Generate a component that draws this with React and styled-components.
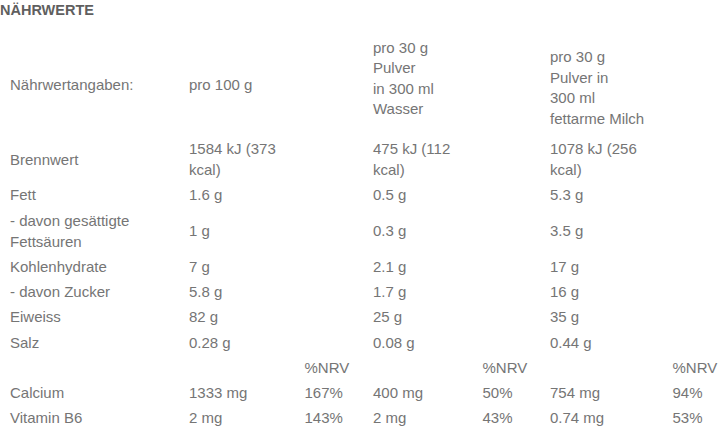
import React from "react";
import styled, { createGlobalStyle } from "styled-components";

const Global = createGlobalStyle`
  html, body { margin: 0; padding: 0; background: #ffffff; }
  body { font-family: "Liberation Sans", Arial, sans-serif; }
`;

const Page = styled.div`
  width: 720px;
  height: 430px;
  overflow: hidden;
  background: #fff;
`;

const Title = styled.div`
  font-size: 14.5px;
  line-height: 20px;
  font-weight: bold;
  color: #5f5f5f;
`;

const Table = styled.table`
  margin: 14px 0 0 10px;
  width: 710px;
  table-layout: fixed;
  border-collapse: collapse;
  font-size: 15px;
  line-height: 21.2px;
  color: #757575;
`;

const Cell = styled.td`
  padding: 2px 12px 2px 0;
  vertical-align: middle;
  text-align: left;
  white-space: normal;
`;

const HeadCell = styled(Cell)`
  line-height: 20.5px;
  padding-top: ${(p) => p.$top}px;
  padding-bottom: ${(p) => p.$bottom}px;
`;

const widths = [179, 115.5, 68.5, 109.5, 67.5, 122.5, 47.5];

const rows = [
  ["Brennwert", "1584 kJ (373 kcal)", "", "475 kJ (112 kcal)", "", "1078 kJ (256 kcal)", ""],
  ["Fett", "1.6 g", "", "0.5 g", "", "5.3 g", ""],
  ["- davon gesättigte Fettsäuren", "1 g", "", "0.3 g", "", "3.5 g", ""],
  ["Kohlenhydrate", "7 g", "", "2.1 g", "", "17 g", ""],
  ["- davon Zucker", "5.8 g", "", "1.7 g", "", "16 g", ""],
  ["Eiweiss", "82 g", "", "25 g", "", "35 g", ""],
  ["Salz", "0.28 g", "", "0.08 g", "", "0.44 g", ""],
  ["", "", "%NRV", "", "%NRV", "", "%NRV"],
  ["Calcium", "1333 mg", "167%", "400 mg", "50%", "754 mg", "94%"],
  ["Vitamin B6", "2 mg", "143%", "2 mg", "43%", "0.74 mg", "53%"],
];

export default function App() {
  return (
    <Page>
      <Global />
      <Title>NÄHRWERTE</Title>
      <Table>
        <colgroup>
          {widths.map((w, i) => (
            <col key={i} style={{ width: `${w}px` }} />
          ))}
        </colgroup>
        <tbody>
          <tr>
            <HeadCell $top={2} $bottom={2}>Nährwertangaben:</HeadCell>
            <HeadCell $top={2} $bottom={2}>pro 100 g</HeadCell>
            <HeadCell $top={2} $bottom={2}></HeadCell>
            <HeadCell $top={3.5} $bottom={16.5}>
              pro 30 g<br />Pulver<br />in 300 ml<br />Wasser
            </HeadCell>
            <HeadCell $top={2} $bottom={2}></HeadCell>
            <HeadCell $top={8} $bottom={2}>
              pro 30 g<br />Pulver in<br />300 ml<br />fettarme Milch
            </HeadCell>
            <HeadCell $top={2} $bottom={2}></HeadCell>
          </tr>
          {rows.map((r, i) => (
            <tr key={i}>
              {r.map((c, j) => (
                <Cell key={j}>{c}</Cell>
              ))}
            </tr>
          ))}
        </tbody>
      </Table>
    </Page>
  );
}
